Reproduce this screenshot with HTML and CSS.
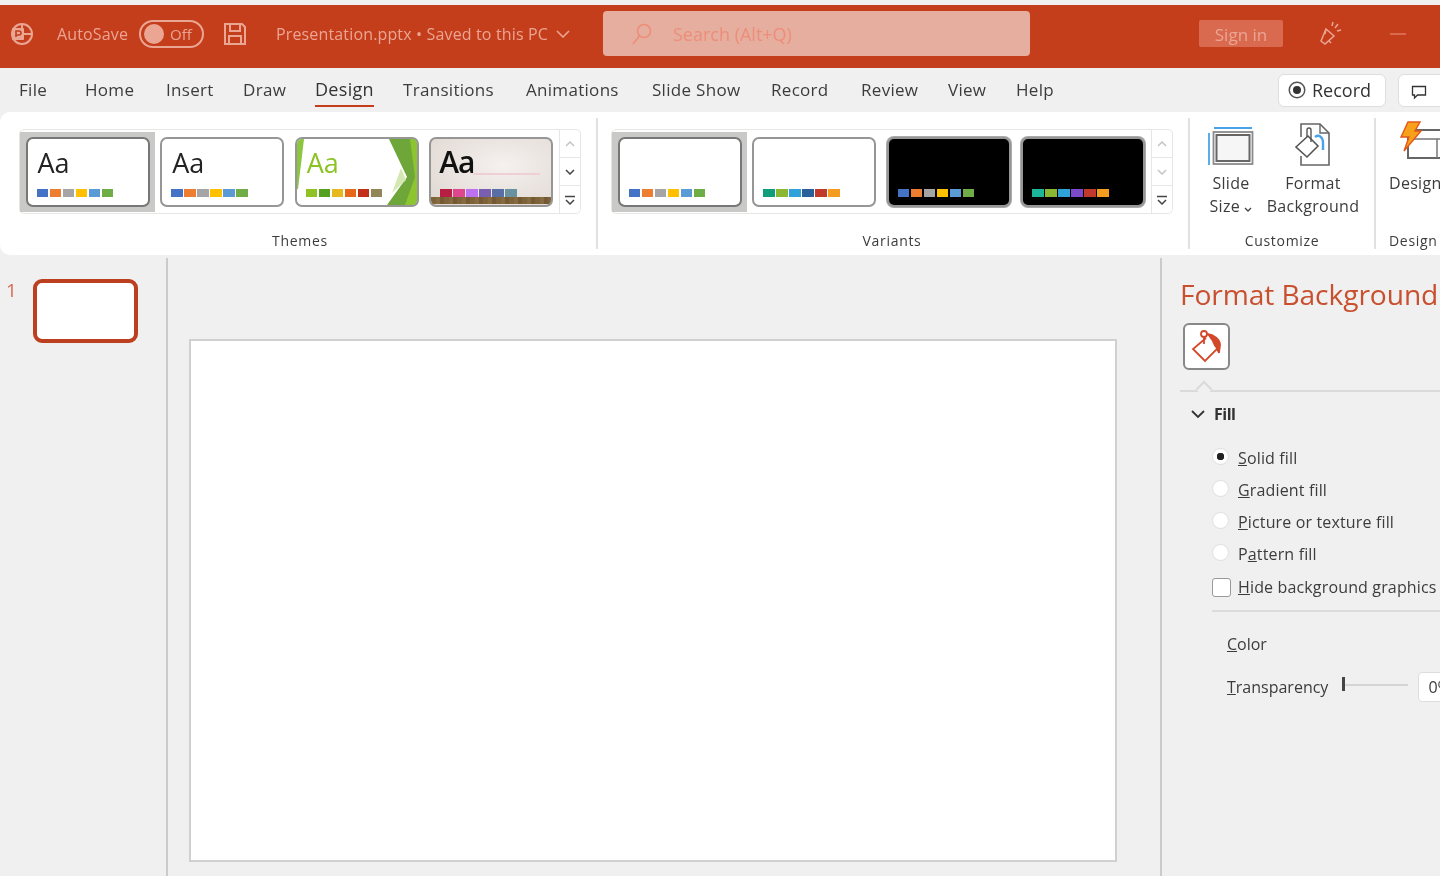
FILE: index.html
```html
<!DOCTYPE html>
<html>
	<head>
		<meta charset="utf-8">
		<title>Presentation.pptx</title>
		<link rel="stylesheet" href="styles.css">
	</head>
	<body>
		<div class="page">
			<div class="titlebar">
				<svg class="ppt-icon" width="26" height="26" viewBox="0 0 26 26"><circle cx="13" cy="13" r="10" fill="none" stroke="#eba593" stroke-width="2"/><path d="M13 3v10h10" fill="none" stroke="#eba593" stroke-width="2"/><rect x="3" y="7" width="12" height="12" rx="1" fill="#eba593"/><path d="M7 16V10h3a2 2 0 0 1 0 4H7" fill="none" stroke="#c43e1c" stroke-width="1.6"/></svg>
				<span class="autosave">AutoSave</span>
				<div class="toggle"><span class="toggle-dot"></span><span>Off</span></div>
				<svg class="save-icon" width="26" height="26" viewBox="0 0 26 26" fill="none" stroke="#eba593" stroke-width="2"><path d="M3 3h17l3 3v17H3z"/><path d="M8 3v7h10V3M7 23v-8h12v8"/></svg>
				<span class="doc-name">Presentation.pptx • Saved to this PC</span>
				<svg class="doc-chevron" width="14" height="8" viewBox="0 0 14 8" fill="none" stroke="#eba593" stroke-width="1.6"><path d="M1 1l6 6 6-6"/></svg>
				<div class="search">
					<svg width="24" height="24" viewBox="0 0 24 24" fill="none" stroke="#ee8d78" stroke-width="1.6"><circle cx="14" cy="9" r="6.5"/><path d="M9.5 14L3 22"/></svg>
					<span>Search (Alt+Q)</span>
				</div>
				<div class="signin">Sign in</div>
				<svg class="pen-icon" width="26" height="28" viewBox="0 0 26 28" fill="none" stroke="#eba593" stroke-width="1.5"><path d="M9 9l8 7-9 8-4-3z"/><path d="M9 9l-1 5M12 21l2 2M18 8l3-4M20 11l4-1M15 6l1-4"/></svg>
				<span class="minimize"></span>
			</div>

			<div class="tabbar">
				<div class="tabs">
					<span>File</span>
					<span>Home</span>
					<span>Insert</span>
					<span>Draw</span>
					<span class="tab-active">Design</span>
					<span>Transitions</span>
					<span>Animations</span>
					<span>Slide Show</span>
					<span>Record</span>
					<span>Review</span>
					<span>View</span>
					<span>Help</span>
				</div>
				<div class="record-btn"><span class="record-dot"></span>Record</div>
				<div class="comment-btn">
					<svg width="16" height="16" viewBox="0 0 16 16" fill="none" stroke="#333" stroke-width="1.3"><path d="M1.5 2.5h13v8.500h-8l-3 3v-3h-2z"/></svg>
				</div>
			</div>

			<div class="ribbon">
				<div class="group group-themes">
					<div class="gallery">
						<div class="cell cell-selected">
							<div class="thumb">
								<span class="aa">Aa</span>
								<div class="swatches"><i class="c1"></i><i class="c2"></i><i class="c3"></i><i class="c4"></i><i class="c5"></i><i class="c6"></i></div>
							</div>
						</div>
						<div class="cell">
							<div class="thumb">
								<span class="aa">Aa</span>
								<div class="swatches"><i class="c1"></i><i class="c2"></i><i class="c3"></i><i class="c4"></i><i class="c5"></i><i class="c6"></i></div>
							</div>
						</div>
						<div class="cell">
							<div class="thumb">
								<svg class="thumb-art" viewBox="0 0 120 66" preserveAspectRatio="none"><path d="M0 0h7L1 50H0z" fill="#8cc63f"/><path d="M92 0H120V66H90L110 38z" fill="#6fa63a"/><path d="M95 54L109 41 104 29z" fill="#d5e8b4"/><path d="M113 0H120V66H108L118 38z" fill="#8cc530"/></svg>
								<span class="aa aa-green">Aa</span>
								<div class="swatches"><i class="g1"></i><i class="g2"></i><i class="g3"></i><i class="g4"></i><i class="g5"></i><i class="g6"></i></div>
							</div>
						</div>
						<div class="cell">
							<div class="thumb thumb-wood">
								<span class="aa aa-bold">Aa</span>
								<span class="wood-line"></span>
								<div class="swatches"><i class="w1"></i><i class="w2"></i><i class="w3"></i><i class="w4"></i><i class="w5"></i><i class="w6"></i></div>
								<span class="wood-floor"></span>
							</div>
						</div>
						<div class="scroller">
							<span><svg width="10" height="6" viewBox="0 0 10 6" fill="none" stroke="#c4c4c4" stroke-width="1.5"><path d="M1 5l4-4 4 4"/></svg></span>
							<span><svg width="10" height="6" viewBox="0 0 10 6" fill="none" stroke="#444" stroke-width="1.5"><path d="M1 1l4 4 4-4"/></svg></span>
							<span><svg width="10" height="10" viewBox="0 0 10 10" fill="none" stroke="#444" stroke-width="1.5"><path d="M0 1.500h10M1 5l4 4 4-4"/></svg></span>
						</div>
					</div>
					<div class="group-label">Themes</div>
				</div>

				<div class="group group-variants">
					<div class="gallery">
						<div class="cell cell-selected">
							<div class="thumb">
								<div class="swatches"><i class="c1"></i><i class="c2"></i><i class="c3"></i><i class="c4"></i><i class="c5"></i><i class="c6"></i></div>
							</div>
						</div>
						<div class="cell">
							<div class="thumb">
								<div class="swatches"><i class="v1"></i><i class="v2"></i><i class="v3"></i><i class="v4"></i><i class="v5"></i><i class="v6"></i></div>
							</div>
						</div>
						<div class="cell">
							<div class="thumb thumb-dark">
								<div class="swatches"><i class="c1"></i><i class="c2"></i><i class="c3"></i><i class="c4"></i><i class="c5"></i><i class="c6"></i></div>
							</div>
						</div>
						<div class="cell">
							<div class="thumb thumb-dark">
								<div class="swatches"><i class="d1"></i><i class="v2"></i><i class="v3"></i><i class="d4"></i><i class="v5"></i><i class="v6"></i></div>
							</div>
						</div>
						<div class="scroller">
							<span><svg width="10" height="6" viewBox="0 0 10 6" fill="none" stroke="#c4c4c4" stroke-width="1.500"><path d="M1 5l4-4 4 4"/></svg></span>
							<span><svg width="10" height="6" viewBox="0 0 10 6" fill="none" stroke="#c4c4c4" stroke-width="1.500"><path d="M1 1l4 4 4-4"/></svg></span>
							<span><svg width="10" height="10" viewBox="0 0 10 10" fill="none" stroke="#444" stroke-width="1.500"><path d="M0 1.500h10M1 5l4 4 4-4"/></svg></span>
						</div>
					</div>
					<div class="group-label">Variants</div>
				</div>

				<div class="group group-customize">
					<div class="big-buttons">
						<div class="big-btn btn-size">
							<svg width="46" height="38" viewBox="0 0 46 38" fill="none"><path d="M6 1h38M1 6v32" stroke="#4aa3e8" stroke-width="1.800"/><rect x="8.500" y="8" width="33" height="26" fill="#f6f6f6" stroke="#666" stroke-width="2"/><rect x="5.500" y="5" width="39" height="32" stroke="#8a8a8a" stroke-width="1.800"/></svg>
							<div class="big-text">Slide<br>Size <svg width="8" height="5" viewBox="0 0 8 5" fill="none" stroke="#444" stroke-width="1.300"><path d="M1 1l3 3 3-3"/></svg></div>
						</div>
						<div class="big-btn btn-bg">
							<svg width="36" height="44" viewBox="0 0 36 44" fill="none"><path d="M6 14V1h19l9 9v32H6v-9" stroke="#666" stroke-width="1.600"/><path d="M25 1v9h9" stroke="#666" stroke-width="1.400"/><path d="M1 24l12-11 10 10-11 11z" fill="#fff" stroke="#555" stroke-width="1.600"/><path d="M12 14V7a2 2 0 0 1 4 0v12" stroke="#555" stroke-width="1.400"/><path d="M20 14c4-3 8 0 8 6v7" stroke="#4aa3e8" stroke-width="2.400"/></svg>
							<div class="big-text">Format<br>Background</div>
						</div>
					</div>
					<div class="group-label">Customize</div>
				</div>

				<div class="group group-design">
					<div class="big-btn btn-design">
						<svg width="64" height="40" viewBox="0 0 64 40" fill="none"><rect x="9" y="9" width="60" height="28" stroke="#666" stroke-width="2"/><path d="M9 18h60M38 18v19" stroke="#777" stroke-width="1.500"/><path d="M9 1h12l-5 9h6L5 30l5-14H2z" fill="#f7a11a" stroke="#e2571c" stroke-width="1.400"/></svg>
						<div class="big-text">Design</div>
					</div>
					<div class="group-label">Design</div>
				</div>
			</div>

			<div class="workspace">
				<div class="slide-pane">
					<span class="slide-num">1</span>
					<div class="slide-thumb"></div>
				</div>
				<div class="canvas">
					<div class="slide"></div>
				</div>
				<div class="panel">
					<div class="panel-title">Format Background</div>
					<div class="fill-tab">
						<svg width="36" height="36" viewBox="0 0 36 36" fill="none" stroke="#d2492a" stroke-width="1.800"><path d="M18 10L5 21l12 12 13-13-5-6"/><circle cx="16" cy="6" r="3"/><path d="M16 9v7" /><path d="M19 6c7 1 13 5 13 11l-1 8c-1-3-2-6-5-9" fill="#d2492a"/></svg>
					</div>
					<div class="panel-rule"><span class="rule-notch"></span></div>
					<div class="section-head">
						<svg width="14" height="8" viewBox="0 0 14 8" fill="none" stroke="#333" stroke-width="1.800"><path d="M1 1l6 6 6-6"/></svg>
						<span>Fill</span>
					</div>
					<div class="options">
						<div class="option"><span class="radio radio-on"></span><span><u>S</u>olid fill</span></div>
						<div class="option"><span class="radio"></span><span><u>G</u>radient fill</span></div>
						<div class="option"><span class="radio"></span><span><u>P</u>icture or texture fill</span></div>
						<div class="option"><span class="radio"></span><span>P<u>a</u>ttern fill</span></div>
						<div class="option option-check"><span class="checkbox"></span><span><u>H</u>ide background graphics</span></div>
					</div>
					<div class="options-rule"></div>
					<div class="prop prop-color"><u>C</u>olor</div>
					<div class="prop prop-transparency">
						<span><u>T</u>ransparency</span>
						<div class="slider"><span class="slider-knob"></span></div>
						<div class="percent">0%</div>
					</div>
				</div>
			</div>
		</div>
	</body>
</html>
```

FILE: styles.css
```css
html, body {
	margin: 0;
	height: 100%;
}
body {
	background-color: #f0f0f0;
	font-family: "Open Sans", "Noto Sans", sans-serif;
	color: #3c3c3c;
	overflow: hidden;
}
.page {
	width: 1440px;
	height: 876px;
	padding-top: 5px;
	box-sizing: border-box;
	overflow: hidden;
	filter: blur(0.55px);
}

/* title bar */
.titlebar {
	height: 63px;
	box-sizing: border-box;
	padding-bottom: 6px;
	background-color: #c43e1c;
	color: #eba593;
	display: flex;
	align-items: center;
	font-size: 16px;
	white-space: nowrap;
	overflow: hidden;
}
.ppt-icon {
	margin-left: 9px;
}
.autosave {
	margin-left: 22px;
	width: 82px;
	letter-spacing: 0.15px;
}
.toggle {
	width: 65px;
	height: 28px;
	box-sizing: border-box;
	border: 2px solid #eba593;
	border-radius: 14px;
	display: flex;
	align-items: center;
	gap: 6px;
	padding-left: 3px;
	font-size: 15px;
}
.toggle-dot {
	width: 20px;
	height: 20px;
	border-radius: 50%;
	background-color: #eba593;
}
.save-icon {
	margin-left: 18px;
}
.doc-name {
	margin-left: 28px;
	width: 280px;
	font-size: 16px;
	letter-spacing: 0.15px;
}
.search {
	margin-left: 33px;
	width: 427px;
	height: 45px;
	background-color: #e5ae9f;
	border-radius: 4px;
	display: flex;
	align-items: center;
	padding-left: 27px;
	box-sizing: border-box;
	color: #ee8d78;
	font-size: 18px;
	gap: 19px;
}
.signin {
	margin-left: 169px;
	width: 84px;
	height: 27px;
	background-color: #d96a50;
	color: #eba593;
	text-align: center;
	line-height: 29px;
	font-size: 17px;
	border-radius: 2px;
}
.pen-icon {
	margin-left: 34px;
}
.minimize {
	margin-left: 47px;
	width: 16px;
	height: 2px;
	background-color: #d96a50;
}

/* tabs */
.tabbar {
	height: 44px;
	display: flex;
	align-items: center;
	background-color: #f0f0f0;
}
.tabs {
	margin-left: 19px;
	width: 1259px;
	flex-shrink: 0;
	display: grid;
	grid-template-columns: 66px 81px 77px 72px 88px 123px 126px 119px 90px 87px 68px 68px;
	font-size: 17px;
	letter-spacing: 0.3px;
	color: #3c3c3c;
}
.tab-active {
	justify-self: start;
	color: #333;
	font-size: 18px;
	line-height: 23px;
	border-bottom: 2px solid #c43e1c;
	height: 27px;
	margin-bottom: -4px;
}
.record-btn {
	width: 108px;
	height: 33px;
	flex-shrink: 0;
	box-sizing: border-box;
	background-color: #fff;
	border: 1px solid #dedede;
	border-radius: 6px;
	display: flex;
	align-items: center;
	gap: 8px;
	padding-left: 11px;
	font-size: 18px;
	color: #333;
}
.record-dot {
	width: 8px;
	height: 8px;
	border-radius: 50%;
	background-color: #333;
	border: 3px solid #fff;
	box-shadow: 0 0 0 1.5px #555;
}
.comment-btn {
	margin-left: 12px;
	width: 60px;
	height: 33px;
	box-sizing: border-box;
	background-color: #fff;
	border: 1px solid #dedede;
	border-radius: 6px;
	padding: 8px 0 0 12px;
	flex-shrink: 0;
}

/* ribbon */
.ribbon {
	height: 143px;
	background-color: #fff;
	border-radius: 10px 0 0 10px;
	display: flex;
	padding-top: 6px;
	padding-bottom: 6px;
	box-sizing: border-box;
	overflow: hidden;
}
.group {
	position: relative;
	box-sizing: border-box;
	border-right: 2px solid #e1e1e1;
	display: flex;
	flex-direction: column;
	flex-shrink: 0;
}
.group-label {
	margin-top: auto;
	text-align: center;
	font-size: 14px;
	line-height: 16px;
	letter-spacing: 0.7px;
	color: #3c3c3c;
}
.group-themes {
	width: 598px;
	padding: 11px 15px 0 19px;
}
.group-variants {
	width: 592px;
	padding: 11px 15px 0 13px;
}
.group-customize {
	width: 186px;
}
.group-design {
	width: 90px;
	border-right: none;
	padding-left: 13px;
}
.gallery {
	height: 85px;
	box-sizing: border-box;
	border: 1px solid #e6e6e6;
	border-radius: 5px;
	display: flex;
	align-items: center;
	position: relative;
}
.cell {
	width: 134.500px;
	height: 80px;
	display: flex;
	align-items: center;
	justify-content: center;
	flex-shrink: 0;
}
.cell-selected {
	background-color: #c9c9c7;
	width: 135px;
}
.thumb {
	position: relative;
	width: 124px;
	height: 70px;
	box-sizing: border-box;
	background-color: #fff;
	border: 2px solid #969696;
	border-radius: 7px;
	overflow: hidden;
}
.cell-selected .thumb {
	border-color: #777;
}
.thumb-dark {
	background-color: #000;
	box-shadow: 0 0 0 1px #aaa;
}
.thumb-wood {
	background: radial-gradient(ellipse at 60% 40%, #f5f1ef, #dfd6d0);
}
.thumb-art {
	position: absolute;
	left: 0;
	top: 0;
	width: 100%;
	height: 100%;
}
.aa {
	position: absolute;
	left: 10px;
	top: 6px;
	font-size: 27px;
	line-height: 36px;
	color: #222;
}
.aa-green {
	color: #8cc324;
}
.aa-bold {
	color: #111;
	font-size: 30px;
	font-weight: 600;
	left: 8px;
	top: 5px;
	letter-spacing: -1px;
}
.wood-line {
	position: absolute;
	left: 42px;
	right: 11px;
	top: 34px;
	height: 2px;
	background-color: #efcfd3;
}
.wood-floor {
	position: absolute;
	left: 0;
	right: 0;
	bottom: 1px;
	height: 7px;
	background: repeating-linear-gradient(90deg, #7e6238 0 5px, #876a40 5px 9px, #745a34 9px 13px);
}
.swatches {
	position: absolute;
	left: 9px;
	top: 50px;
	display: flex;
	gap: 1.500px;
}
.swatches i {
	display: block;
	width: 11.500px;
	height: 8px;
}
.c1 { background-color: #4472c4; }
.c2 { background-color: #ed7d31; }
.c3 { background-color: #a5a5a5; }
.c4 { background-color: #ffc000; }
.c5 { background-color: #5b9bd5; }
.c6 { background-color: #70ad47; }
.g1 { background-color: #90c226; }
.g2 { background-color: #54a021; }
.g3 { background-color: #e6b91e; }
.g4 { background-color: #e76618; }
.g5 { background-color: #c42f1a; }
.g6 { background-color: #918655; }
.w1 { background-color: #b71e42; }
.w2 { background-color: #de478e; }
.w3 { background-color: #bc72f0; }
.w4 { background-color: #795faf; }
.w5 { background-color: #586ea6; }
.w6 { background-color: #6892a0; }
.v1 { background-color: #0f9d7a; }
.v2 { background-color: #8ab833; }
.v3 { background-color: #2fa3d9; }
.v4 { background-color: #2a6099; }
.v5 { background-color: #c0392b; }
.v6 { background-color: #f39c1f; }
.d1 { background-color: #1cb79a; }
.d4 { background-color: #7d4bc7; }
.scroller {
	margin-left: auto;
	width: 21px;
	height: 83px;
	box-sizing: border-box;
	border-left: 1px solid #e6e6e6;
	display: flex;
	flex-direction: column;
}
.scroller span {
	flex: 1;
	display: flex;
	align-items: center;
	justify-content: center;
	border-bottom: 1px solid #e6e6e6;
}
.scroller span:last-child {
	border-bottom: none;
}

/* big ribbon buttons */
.big-buttons {
	display: flex;
}
.big-btn {
	display: flex;
	flex-direction: column;
	align-items: center;
}
.big-text {
	font-size: 16px;
	line-height: 23px;
	text-align: center;
	letter-spacing: 0.3px;
	color: #3c3c3c;
	margin-top: 6px;
	white-space: nowrap;
}
.btn-size {
	width: 82px;
	padding-top: 9px;
}
.btn-size .big-text {
	margin-top: 7px;
}
.btn-bg {
	width: 82px;
	padding-top: 5px;
}
.btn-bg .big-text {
	margin-top: 5px;
}
.btn-design {
	align-items: flex-start;
	width: 70px;
	padding-top: 3px;
}
.btn-design svg {
	margin-left: 10px;
}
.btn-design .big-text {
	margin-top: 11px;
}
.group-design .group-label {
	text-align: left;
}

/* workspace */
.workspace {
	height: 621px;
	margin-top: 3px;
	display: flex;
}
.slide-pane {
	width: 168px;
	box-sizing: border-box;
	border-right: 2px solid #cbcbcb;
	display: flex;
	align-items: flex-start;
	padding: 21px 0 0 6px;
	flex-shrink: 0;
}
.slide-num {
	width: 27px;
	font-size: 19px;
	line-height: 22px;
	color: #d9694f;
}
.slide-thumb {
	width: 105px;
	height: 64px;
	box-sizing: border-box;
	background-color: #fff;
	border: 4px solid #bc3f20;
	border-radius: 9px;
}
.canvas {
	width: 992px;
	padding: 81px 0 0 21px;
	box-sizing: border-box;
	flex-shrink: 0;
}
.slide {
	width: 928px;
	height: 523px;
	box-sizing: border-box;
	background-color: #fff;
	border: 2px solid #d0d0d0;
}

/* format background panel */
.panel {
	flex: 1;
	box-sizing: border-box;
	border-left: 2px solid #cbcbcb;
	padding-left: 18px;
	white-space: nowrap;
	overflow: hidden;
}
.panel-title {
	margin-top: 16px;
	font-size: 28.200px;
	line-height: 40px;
	letter-spacing: -0.1px;
	color: #c9502f;
}
.fill-tab {
	margin: 9px 0 0 3px;
	width: 47px;
	height: 47px;
	box-sizing: border-box;
	background-color: #fff;
	border: 2px solid #888;
	border-radius: 6px;
	padding: 3px;
}
.panel-rule {
	position: relative;
	margin-top: 20px;
	height: 2px;
	background-color: #dadada;
}
.rule-notch {
	position: absolute;
	left: 18px;
	top: -7px;
	width: 12px;
	height: 12px;
	box-sizing: border-box;
	background-color: #f0f0f0;
	border-left: 2px solid #dadada;
	border-top: 2px solid #dadada;
	transform: rotate(45deg);
}
.section-head {
	display: flex;
	align-items: center;
	gap: 9px;
	margin: 10px 0 0 11px;
	font-size: 16px;
	line-height: 24px;
	font-weight: 700;
	color: #333;
	letter-spacing: -0.5px;
}
.options {
	margin: 16px 0 0 32px;
	display: flex;
	flex-direction: column;
	font-size: 16px;
	letter-spacing: 0.15px;
	color: #3c3c3c;
}
.option {
	height: 32px;
	display: flex;
	align-items: center;
	gap: 9px;
}
.option-check {
	height: 34px;
	gap: 7px;
}
.radio {
	width: 17px;
	height: 17px;
	box-sizing: border-box;
	background-color: #fff;
	border: 1px solid #ddd;
	border-radius: 50%;
	margin-top: -4px;
	flex-shrink: 0;
}
.radio-on {
	background: radial-gradient(circle, #222 3.5px, #fff 4px);
}
.checkbox {
	width: 19px;
	height: 19px;
	box-sizing: border-box;
	background-color: #fff;
	border: 1.500px solid #999;
	border-radius: 3px;
	flex-shrink: 0;
}
.options-rule {
	margin: 6px 0 0 32px;
	height: 2px;
	background-color: #dcdcdc;
}
.prop {
	margin-left: 47px;
	font-size: 16px;
	color: #3c3c3c;
}
.prop-color {
	margin-top: 20px;
	line-height: 24px;
}
.prop-transparency {
	margin-top: 12px;
	display: flex;
	align-items: center;
	height: 38px;
}
.slider {
	position: relative;
	margin-left: 14px;
	margin-top: -4px;
	width: 66px;
	height: 2px;
	background-color: #d4d4d4;
	flex-shrink: 0;
}
.slider-knob {
	position: absolute;
	left: 0;
	top: -7px;
	width: 3px;
	height: 14px;
	background-color: #444;
}
.percent {
	margin-left: 10px;
	width: 50px;
	height: 30px;
	box-sizing: border-box;
	background-color: #fff;
	border: 1px solid #ddd;
	border-radius: 4px;
	padding-left: 9px;
	line-height: 28px;
	flex-shrink: 0;
}
```
